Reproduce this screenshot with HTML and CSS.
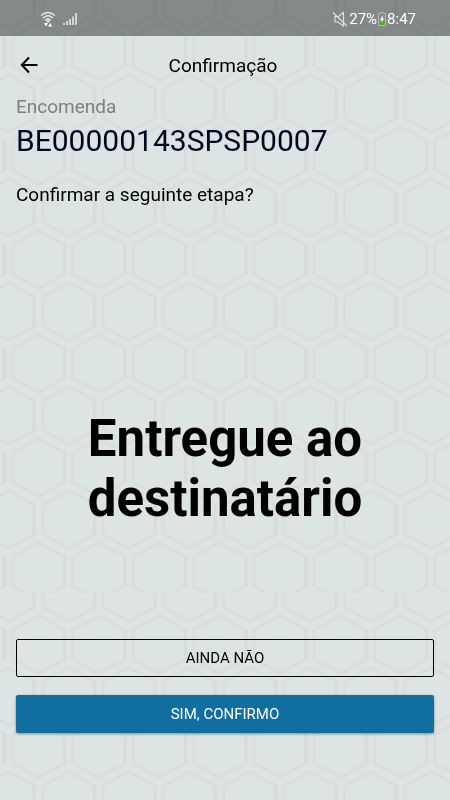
FILE: index.html
```html
<!DOCTYPE html>
<html lang="pt">
<head>
<meta charset="utf-8">
<meta name="viewport" content="width=device-width, initial-scale=1">
<title>Confirmação</title>
<link rel="stylesheet" href="styles.css">
</head>
<body>
<svg class="backdrop" aria-hidden="true">
  <defs>
    <g id="hex">
      <path d="M0 1.5 26 16V45L0 59.5-26 45V16Z" fill="#dde4e4" stroke="#dae0e0" stroke-width="3.4"/>
      <path d="M0 1.5 26 16V45L0 59.5-26 45V16Z" stroke="#d8dede" fill="none" stroke-width="1.4"/>
      <path d="M26 16V45" stroke="#d7dcdd" stroke-width="3.4"/>
    </g>
    <pattern id="comb" x="8.5" y="21" width="60.33" height="104" patternUnits="userSpaceOnUse">
      <rect width="61" height="104" fill="#dee4e4"/>
      <use href="#hex" x="30.17"/>
      <use href="#hex" x="30.17" y="104"/>
      <use href="#hex" x="0" y="52"/>
      <use href="#hex" x="60.33" y="52"/>
      <use href="#hex" x="0" y="-52"/>
      <use href="#hex" x="60.33" y="-52"/>
    </pattern>
    <rect id="sheet" width="100%" height="593" fill="url(#comb)"/>
  </defs>
  <use href="#sheet"/>
  <use href="#sheet" y="593"/>
  <use href="#sheet" y="1186"/>
</svg>
<div class="screen">
  <div class="status">
    <div class="status-group signals">
      <svg width="16" height="16" viewBox="0 0 16 16" fill="none" stroke="#e6e8e8" stroke-width="1.3">
        <path d="M1 4.6Q8-1.6 15 4.6M3 7Q8 2.600 13 7M5.200 9.200Q8 6.800 10.800 9.200"/>
        <path d="M6 9.500h4L8 12Z" fill="#fff" stroke="none"/>
        <path d="M4 12h4l-2 3.500ZM8.200 15.500h4l-2-3.500Z" fill="#fff" stroke="none"/>
      </svg>
      <svg width="16" height="14" viewBox="0 0 16 14" fill="#d3d5d5">
        <path d="M1 11h2v2H1ZM4 9h2v4H4ZM7 7h2v6H7ZM10 4.500h2V13h-2ZM13 1h2v12h-2Z"/>
      </svg>
    </div>
    <div class="status-group">
      <svg class="mute" width="16" height="16" viewBox="0 0 16 16" fill="none" stroke="#e2e4e4" stroke-width="1.100">
        <path d="M3 5.500V11h3l5.500 4V1.500L6.500 5.500ZM1 1.500 15 15"/>
      </svg>
      <span>27%</span>
      <svg width="10" height="14" viewBox="0 0 10 14">
        <path d="M3.500.5h3v1h2v12h-7v-12h2Z" fill="#858a87" stroke="#b4bab4"/>
        <path d="M2 9h6v4H2Z" fill="#4fb512"/>
        <path d="M6 3 3 7.500h1.700L4 11l3.200-4.500H5.400Z" fill="#fff"/>
      </svg>
      <time>8:47</time>
    </div>
  </div>
  <header class="bar">
    <button class="back" type="button" aria-label="Voltar">
      <svg width="18" height="18" viewBox="0 0 18 18" fill="none" stroke="#000" stroke-width="2">
        <path d="M17.500 9H2M9 1.500 1.800 9 9 16.500"/>
      </svg>
    </button>
    <h1>Confirmação</h1>
  </header>
  <main>
    <p class="label">Encomenda</p>
    <p class="code">BE00000143SPSP0007</p>
    <p class="question">Confirmar a seguinte etapa?</p>
    <h2>Entregue ao destinatário</h2>
    <div class="actions">
      <button class="btn outline" type="button">AINDA NÃO</button>
      <button class="btn primary" type="button">SIM, CONFIRMO</button>
    </div>
  </main>
</div>
</body>
</html>
```
FILE: styles.css
```css
* {
  box-sizing: border-box;
}

body {
  margin: 0;
  background: #dde4e4;
  color: #000;
  font-family: Roboto, "Liberation Sans", sans-serif;
}

h1, h2, p {
  margin: 0;
  font-weight: 400;
}

svg {
  display: block;
}

.backdrop {
  position: fixed;
  inset: 0;
  z-index: -1;
  width: 100%;
  height: 100%;
}

.screen {
  display: flex;
  flex-direction: column;
  min-height: 100vh;
}

.status {
  display: flex;
  align-items: center;
  justify-content: space-between;
  height: 36px;
  padding: 2px 34px 0 40px;
  background: rgba(0, 0, 0, 0.4);
  color: #fff;
  font-size: 15px;
}

.status-group {
  display: flex;
  align-items: center;
}

.signals {
  gap: 6px;
}

.mute {
  margin-right: 1px;
}

.bar {
  display: grid;
  grid-template-columns: 26px 1fr 30px;
  align-items: center;
  height: 58px;
  padding: 0 16px;
}

.back {
  padding: 4px;
  border: 0;
  background: none;
}

.bar h1 {
  font-size: 19px;
  text-align: center;
}

main {
  display: flex;
  flex: 1;
  flex-direction: column;
  padding: 0 16px 67px;
}

.label {
  color: #7d8080;
  font-size: 19px;
  line-height: 26px;
}

.code {
  color: #020821;
  font-size: 30px;
  line-height: 42px;
}

.question {
  margin-top: 20px;
  font-size: 19px;
  line-height: 26px;
}

h2 {
  max-width: 360px;
  margin: auto auto 110px;
  font-size: 51px;
  font-weight: 700;
  line-height: 60px;
  text-align: center;
}

.actions {
  display: grid;
  gap: 18px;
}

.btn {
  height: 38px;
  border: 0;
  border-radius: 2px;
  font: 400 15px Roboto, "Liberation Sans", sans-serif;
}

.outline {
  border: 1px solid #000;
  background: none;
  color: #000;
}

.primary {
  background: #116f9f;
  box-shadow: 0 1px 3px rgba(0, 0, 0, 0.4);
  color: #fff;
}
```
